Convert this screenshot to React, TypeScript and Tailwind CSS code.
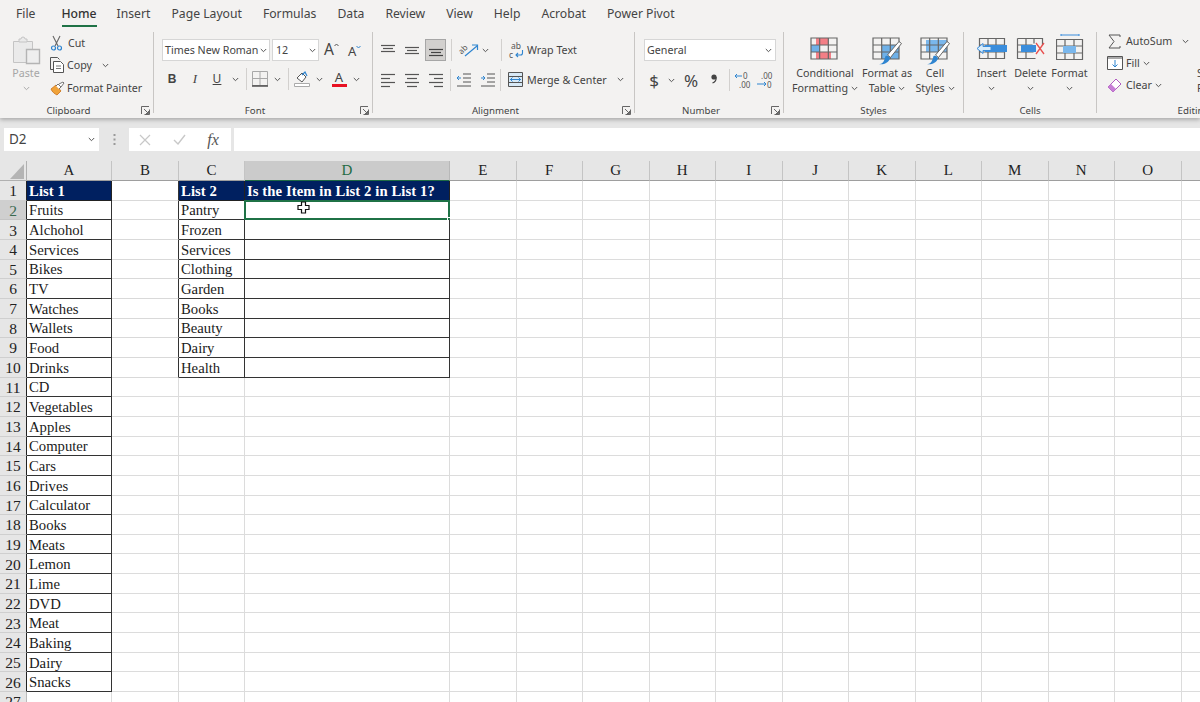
import React from "react";

const Chev = ({ c = "#555" }: { c?: string }) => (
  <svg width="7" height="5" viewBox="0 0 7 5" className="shrink-0"><path d="M.8 1l2.700 2.700L6.200 1" fill="none" stroke={c} strokeWidth="1" /></svg>
);
const Launcher = () => (
  <svg width="9" height="9" viewBox="0 0 9 9"><path d="M.5 8V.5H8M8.500 3.500V8.500H3.500M3 3l4.500 4.500M5 7.500h2.500V5" fill="none" stroke="#666" strokeWidth="1" /></svg>
);
const Lines = ({ rows, w = 16, color = "#555" }: { rows: [number, number, number][]; w?: number; color?: string }) => (
  <svg width={w} height="16" viewBox={`0 0 ${w} 16`}>
    {rows.map(([x1, x2, y], i) => <path key={i} d={`M${x1} ${y + 0.5}H${x2}`} stroke={color} strokeWidth="1.2" />)}
  </svg>
);
const Group = ({ w, label, launcher, children }: { w: string; label: string; launcher?: boolean; children: React.ReactNode }) => (
  <div className={`${w} h-[81px] shrink-0 border-r border-[#c8c6c4] flex flex-col`}>
    <div className="h-[69px]">{children}</div>
    <div className={`relative h-[12px] flex justify-center text-[9.7px] leading-[20px] text-[#444] ${launcher ? "pr-[16px]" : ""}`}>
      {label}
      {launcher && <span className="absolute right-[3px] top-[5px]"><Launcher /></span>}
    </div>
  </div>
);
const Sep = ({ h = "h-[24px]" }: { h?: string }) => <div className={`w-px ${h} bg-[#d2d0ce]`} />;

const TableBase = ({ children, over, w = 26, h = 21 }: { children?: React.ReactNode; over?: React.ReactNode; w?: number; h?: number }) => (
  <svg width={w + 4} height={h + 8} viewBox={`-1 -1 ${w + 4} ${h + 8}`} className="overflow-visible">
    {children}
    <path d={`M0 0H${w}V${h}H0ZM0 ${h / 3}H${w}M0 ${(2 * h) / 3}H${w}M${w / 3} 0V${h}M${(2 * w) / 3} 0V${h}`} fill="none" stroke="#666" strokeWidth="1.200" />
    {over}
  </svg>
);
const Brush = () => (
  <g>
    <path d="M14.500 17L26 3.500l2.500 2L17.500 19.500z" fill="#fff" stroke="#666" strokeWidth="1" />
    <path d="M6 26c3 0 5-1.500 6.500-8 2-.8 4 .5 4.500 2.500C15.500 25 10 27 6 26z" fill="#2f85d0" />
  </g>
);

function Clipboard() {
  return (
    <div className="flex h-full">
      <div className="w-[50px] pl-[2px] flex flex-col items-center pt-[4px] text-[10.700px] text-[#a6a6a6]">
        <svg width="29" height="29" viewBox="0 0 29 29">
          <path d="M1.500 5.500h19v21h-19z" fill="#eaeaea" stroke="#c4c4c4" />
          <path d="M7 6V3h2a2 2 0 0 1 4 0h2v3z" fill="#eaeaea" stroke="#c4c4c4" />
          <path d="M14.500 13.500h13v14h-13z" fill="#eeeeee" stroke="#b4b4b4" strokeWidth="1.400" />
        </svg>
        <span className="leading-[15px] mt-[1px]">Paste</span>
        <span className="mt-[5px]"><Chev c="#aaa" /></span>
      </div>
      <div className="flex flex-col text-[10.700px] text-[#444]">
        <div className="h-[22px] flex items-center">
          <svg width="13" height="16" viewBox="0 0 13 16" className="mr-[5px]">
            <path d="M3 1l5 10M10 1L5 11" stroke="#666" strokeWidth="1.100" fill="none" />
            <circle cx="3.500" cy="13" r="2" fill="none" stroke="#2f85d0" strokeWidth="1.200" />
            <circle cx="9.500" cy="13" r="2" fill="none" stroke="#2f85d0" strokeWidth="1.200" />
          </svg>
          Cut
        </div>
        <div className="h-[22px] flex items-center">
          <svg width="16" height="16" viewBox="0 0 16 16" className="mr-[1px]">
            <path d="M3.500 12.500h-3V.5h7l2 2" fill="none" stroke="#555" />
            <path d="M3.500 4.500h7l3 3v8h-10z" fill="#fff" stroke="#555" />
            <path d="M6 9h5M6 11.500h5" stroke="#777" />
          </svg>
          <span>Copy</span>
          <span className="ml-[10px]"><Chev /></span>
        </div>
        <div className="h-[22px] mt-[1px] flex items-center">
          <svg width="15" height="15" viewBox="0 0 15 15" className="mr-[2px]">
            <path d="M1 8l5-4 5 6-4 4C5 13 2 11 1 8z" fill="#f0a33a" stroke="#c8701a" strokeWidth=".8" />
            <path d="M6 5l2-2 3 3-2 2M9 3l4-2 1 1-3 4" fill="#fff" stroke="#666" strokeWidth=".9" />
          </svg>
          Format Painter
        </div>
      </div>
    </div>
  );
}

function FontGroup() {
  return (
    <div className="pl-[8px] pt-[7px] text-[#444]">
      <div className="flex items-center h-[22px]">
        <div className="w-[108px] h-[22px] bg-white border border-[#d6d6d6] flex items-center justify-between px-[2px] text-[10.700px] whitespace-nowrap">Times New Roman<Chev /></div>
        <div className="ml-[2px] w-[47px] h-[22px] bg-white border border-[#d6d6d6] flex items-center justify-between pl-[3px] pr-[2px] text-[10.700px]">12<Chev /></div>
        <div className="ml-[5px] w-[19px] flex items-start text-[15.500px] leading-none">A<svg width="5" height="4" viewBox="0 0 5 4" className="mt-[1px]"><path d="M.5 3L2.500 1l2 2" fill="none" stroke="#555" /></svg></div>
        <div className="ml-[5px] w-[18px] flex items-start text-[13px] leading-none pt-[2px]">A<svg width="5" height="4" viewBox="0 0 5 4"><path d="M.5 1l2 2 2-2" fill="none" stroke="#2f85d0" /></svg></div>
      </div>
      <div className="flex items-center h-[22px] mt-[7px] text-[12px]">
        <div className="w-[20px] text-center font-bold font-['Liberation_Sans',sans-serif]">B</div>
        <div className="w-[26px] text-center italic font-['Liberation_Serif',serif] text-[13px]">I</div>
        <div className="w-[18px] text-center underline">U</div>
        <div className="w-[18px] flex justify-center"><Chev /></div>
        <div className="w-[4px] flex justify-center"><Sep h="h-[22px]" /></div>
        <div className="w-[23px] flex justify-center">
          <svg width="16" height="16" viewBox="0 0 16 16"><path d="M.5 .5h15v14H.5zM8 .5v14M.5 7.500h15" fill="none" stroke="#a8a8a8" /><path d="M0 15h16" stroke="#444" strokeWidth="1.400" /></svg>
        </div>
        <div className="w-[12px] flex justify-center"><Chev /></div>
        <div className="w-[10px] flex justify-center"><Sep h="h-[22px]" /></div>
        <div className="w-[18px] flex justify-center">
          <svg width="16" height="16" viewBox="0 0 16 16"><path d="M3 7l5-5 4 4-4 5z" fill="#fff" stroke="#555" /><path d="M8 4l3-3 2 4" fill="none" stroke="#2f85d0" strokeWidth="1.200" /><path d="M.5 12.500h15v3H.5z" fill="#fff" stroke="#aaa" /></svg>
        </div>
        <div className="w-[16px] flex justify-center"><Chev /></div>
        <div className="w-[24px] flex flex-col items-center">
          <span className="text-[13px] leading-[13px]">A</span>
          <span className="w-[15px] h-[3px] bg-[#e81123]" />
        </div>
        <div className="w-[10px] flex justify-center"><Chev /></div>
      </div>
    </div>
  );
}

const L3 = { top: [[1, 15, 3], [3, 13, 6], [1, 15, 9]] as [number, number, number][], mid: [[1, 15, 5], [3, 13, 8], [1, 15, 11]] as [number, number, number][], bot: [[1, 15, 7], [3, 13, 10], [1, 15, 13]] as [number, number, number][] };
const L4l: [number, number, number][] = [[1, 15, 2], [1, 10, 6], [1, 15, 10], [1, 10, 14]];
const L4c: [number, number, number][] = [[1, 15, 2], [3, 13, 6], [1, 15, 10], [3, 13, 14]];
const L4r: [number, number, number][] = [[1, 15, 2], [6, 15, 6], [1, 15, 10], [6, 15, 14]];
const Slot24 = ({ children }: { children: React.ReactNode }) => <div className="w-[24px] flex justify-center">{children}</div>;

function Alignment() {
  return (
    <div className="pl-[3px] pt-[7px] text-[#444] text-[10.700px]">
      <div className="flex items-center h-[22px]">
        <Slot24><Lines rows={L3.top} /></Slot24>
        <Slot24><Lines rows={L3.mid} /></Slot24>
        <div className="ml-px w-[21px] h-[22px] bg-[#d2d0ce] border border-[#a6a6a6] flex justify-center items-center"><Lines rows={L3.bot} color="#444" /></div>
        <div className="w-[10px] flex justify-center"><Sep h="h-[22px]" /></div>
        <div className="w-[41px] flex items-center pl-[1px]">
          <svg width="24" height="18" viewBox="0 0 24 18" className="overflow-visible">
            <text x="1" y="11" fontSize="8" fill="#555" transform="rotate(-45 6 8)" fontFamily="Noto Sans">ab</text>
            <path d="M8 15L20 5M15 4h5.500v5" fill="none" stroke="#2f85d0" strokeWidth="1.200" />
          </svg>
          <span className="ml-[1px]"><Chev /></span>
        </div>
        <div className="w-[8px] flex justify-center"><Sep h="h-[22px]" /></div>
        <div className="ml-[4px] flex items-center whitespace-nowrap">
          <span className="relative w-[15px] h-[17px] mr-[3px] overflow-visible">
            <span className="absolute left-[2px] -top-[1px] text-[8.500px] leading-[9px] text-[#555]">ab</span>
            <span className="absolute left-0 top-[8px] text-[8.500px] leading-[9px] text-[#555]">c</span>
            <svg width="15" height="17" viewBox="0 0 15 17" className="absolute left-0 top-0">
              <path d="M13.500 8v3a2 2 0 0 1-2 2H7M9 11l-2 2 2 2" fill="none" stroke="#2f85d0" strokeWidth="1.100" />
            </svg>
          </span>
          Wrap Text
        </div>
      </div>
      <div className="flex items-center h-[22px] mt-[8px]">
        <Slot24><Lines rows={L4l} /></Slot24>
        <Slot24><Lines rows={L4c} /></Slot24>
        <Slot24><Lines rows={L4r} /></Slot24>
        <div className="w-[4px] flex justify-center"><Sep h="h-[22px]" /></div>
        <Slot24>
          <svg width="16" height="16" viewBox="0 0 16 16"><path d="M7 2h8M7 6h8M7 10h8M1 14h14" stroke="#555" /><path d="M5 6H1M3 4L1 6l2 2" fill="none" stroke="#2f85d0" /></svg>
        </Slot24>
        <Slot24>
          <svg width="16" height="16" viewBox="0 0 16 16"><path d="M7 2h8M7 6h8M7 10h8M1 14h14" stroke="#555" /><path d="M1 6h4M3 4l2 2-2 2" fill="none" stroke="#2f85d0" /></svg>
        </Slot24>
        <div className="w-[1px] flex justify-center"><Sep h="h-[22px]" /></div>
        <div className="ml-[7px] flex items-center whitespace-nowrap">
          <svg width="15" height="15" viewBox="0 0 15 15" className="mr-[4px]">
            <path d="M.5 .5h14v14H.5z" fill="#d8e9f6" stroke="#555" />
            <path d="M.5 4.500h14M.5 10.500h14" stroke="#555" />
            <path d="M2 7.500h11M4.500 5.500l-2 2 2 2M10.500 5.500l2 2-2 2" fill="none" stroke="#2f85d0" />
          </svg>
          Merge &amp; Center
          <span className="ml-[10px]"><Chev /></span>
        </div>
      </div>
    </div>
  );
}

function NumberGroup() {
  return (
    <div className="pl-[9px] pt-[7px] text-[#444]">
      <div className="w-[132px] h-[22px] bg-white border border-[#d6d6d6] flex items-center justify-between pl-[2px] pr-[3px] text-[10.700px]">General<Chev /></div>
      <div className="flex items-center h-[22px] mt-[8px]">
        <div className="w-[20px] text-center text-[17px] leading-none">$</div>
        <div className="w-[14px] flex justify-center"><Chev /></div>
        <div className="w-[26px] text-center text-[17px] leading-none">%</div>
        <div className="w-[20px] h-[22px] flex justify-center">
          <svg width="6" height="12" viewBox="0 0 6 12" className="mt-[5px]"><circle cx="3" cy="3" r="2.600" fill="#444" /><path d="M5 3c.5 3-1 5-3.500 6" fill="none" stroke="#444" strokeWidth="1.200" /></svg>
        </div>
        <div className="w-[10px] flex justify-center"><Sep h="h-[22px]" /></div>
        <div className="w-[18px] relative h-[18px] text-[8px] leading-[9px] text-[#555]">
          <span className="absolute left-[9px] top-0">0</span>
          <span className="absolute left-[5px] top-[9px]">.00</span>
          <svg width="8" height="8" viewBox="0 0 8 8" className="absolute left-0 top-[1px]"><path d="M8 4H1M3 2L1 4l2 2" fill="none" stroke="#2f85d0" /></svg>
        </div>
        <div className="ml-[2px] w-[22px] relative h-[18px] text-[8px] leading-[9px] text-[#555]">
          <span className="absolute left-[7px] top-0">.00</span>
          <span className="absolute left-[13px] top-[9px]">0</span>
          <svg width="11" height="8" viewBox="0 0 11 8" className="absolute left-[2px] top-[9px]"><path d="M1 4h9M8 2l2 2-2 2" fill="none" stroke="#2f85d0" /></svg>
        </div>
      </div>
    </div>
  );
}

const BigBtn = ({ w, icon, l1, l2 }: { w: string; icon: React.ReactNode; l1: string; l2?: string }) => (
  <div className={`${w} shrink-0 flex flex-col items-center pt-[5px] text-[10.700px] leading-[15px] text-[#444] whitespace-nowrap`}>
    <div className="h-[29px]">{icon}</div>
    <span>{l1}</span>
    {l2 ? <span className="flex items-center gap-[3px]">{l2}<Chev /></span> : <span className="h-[15px] flex items-center"><Chev /></span>}
  </div>
);

function Styles() {
  return (
    <div className="flex pl-[8px] h-full">
      <BigBtn w="w-[66px]" l1="Conditional" l2="Formatting" icon={
        <TableBase>
          <rect x="5" y="0" width="12" height="7" fill="#f37f86" />
          <rect x="5" y="14" width="15" height="7" fill="#f37f86" />
          <rect x="0" y="7" width="9" height="7" fill="#6fb1e8" />
        </TableBase>} />
      <BigBtn w="w-[58px]" l1="Format as" l2="Table" icon={
        <TableBase over={<Brush />}>
          <rect x="9" y="7" width="17" height="14" fill="#6fb1e8" />
        </TableBase>} />
      <BigBtn w="w-[38px]" l1="Cell" l2="Styles" icon={
        <TableBase over={<Brush />}>
          <rect x="5" y="2" width="21" height="12" fill="#7ab7ec" />
        </TableBase>} />
    </div>
  );
}

function Cells() {
  return (
    <div className="flex pl-[8px] h-full">
      <BigBtn w="w-[39px]" l1="Insert" icon={
        <svg width="30" height="24" viewBox="0 0 30 24">
          <path d="M2.500 1.500h25v20h-25zM2.500 8h25M2.500 15h25M11 1.500v20M19 1.500v20" fill="none" stroke="#666" strokeWidth="1.200" />
          <rect x="8" y="8" width="22" height="7" fill="#3a8ddc" />
          <path d="M0 11.500L6 6.500v3h8v4H6v3z" fill="#d9ecfa" stroke="#3a8ddc" />
        </svg>} />
      <BigBtn w="w-[39px]" l1="Delete" icon={
        <svg width="30" height="24" viewBox="0 0 30 24">
          <path d="M1.500 1.500h25v6.500M1.500 1.500v20h18M1.500 8h15M1.500 15h16M10 1.500v20M18 1.500v5" fill="none" stroke="#666" strokeWidth="1.200" />
          <rect x="5" y="8" width="15" height="7" fill="#3a8ddc" />
          <path d="M20 6l8 11M28 6l-8 11" stroke="#e8504f" strokeWidth="1.300" />
        </svg>} />
      <BigBtn w="w-[39px]" l1="Format" icon={
        <svg width="28" height="26" viewBox="0 0 28 26" className="-mt-[3px]">
          <path d="M5 1h18M5 0v2M23 0v2" stroke="#3a8ddc" />
          <path d="M.5 5.500h26v20H.5zM.5 12h26M.5 19h26M9 5.500v20M18 5.500v20" fill="none" stroke="#666" strokeWidth="1.200" />
          <rect x="7" y="12" width="13" height="7" fill="#7ab7ec" />
        </svg>} />
    </div>
  );
}

function Editing() {
  return (
    <div className="flex pl-[10px] -mt-[2px] text-[#444] text-[10.700px]">
      <div className="w-[90px] shrink-0">
        <div className="h-[22px] flex items-center">
          <span className="w-[19px] flex"><svg width="14" height="15" viewBox="0 0 14 15"><path d="M13 3V1H2l5 6.500L2 14h11v-2" fill="none" stroke="#555" /></svg></span>
          AutoSum<span className="ml-[10px]"><Chev /></span>
        </div>
        <div className="h-[22px] flex items-center">
          <span className="w-[19px] flex"><svg width="16" height="14" viewBox="0 0 16 14"><path d="M.5 .500h15v13H.5z" fill="#fff" stroke="#555" /><path d="M.5 2h15" stroke="#555" /><path d="M8 4v7M5.500 8.500L8 11l2.500-2.500" fill="none" stroke="#2f85d0" /></svg></span>
          Fill<span className="ml-[3px]"><Chev /></span>
        </div>
        <div className="h-[22px] flex items-center">
          <span className="w-[19px] flex"><svg width="15" height="15" viewBox="0 0 15 15"><path d="M1 9l8-8 5 5-8 8z" fill="#fff" stroke="#b05cc0" /><path d="M1 9l3-3 5 5-3 3z" fill="#c77fd6" /></svg></span>
          Clear<span className="ml-[3px]"><Chev /></span>
        </div>
      </div>
      <div className="pt-[36px] leading-[15px] whitespace-nowrap">Sort &amp;<br />Filter</div>
    </div>
  );
}

const cols = ["A", "B", "C", "D", "E", "F", "G", "H", "I", "J", "K", "L", "M", "N", "O", "P"];
const list1 = ["List 1", "Fruits", "Alchohol", "Services", "Bikes", "TV", "Watches", "Wallets", "Food", "Drinks", "CD", "Vegetables", "Apples", "Computer", "Cars", "Drives", "Calculator", "Books", "Meats", "Lemon", "Lime", "DVD", "Meat", "Baking", "Dairy", "Snacks"];
const list2 = ["List 2", "Pantry", "Frozen", "Services", "Clothing", "Garden", "Books", "Beauty", "Dairy", "Health"];

function Sheet() {
  const cells: React.ReactNode[] = [];
  cells.push(
    <div key="corner" className="bg-[#e6e6e6] border-r border-b border-[#b0b0b0] flex items-end justify-end pr-[2px] pb-[1px]">
      <svg width="14" height="15" viewBox="0 0 14 15"><path d="M14 0v15H0z" fill="#b4b4b4" /></svg>
    </div>
  );
  cols.forEach((c) => {
    const sel = c === "D";
    cells.push(
      <div key={c} className={`border-r border-b flex items-center justify-center text-[15px] ${sel ? "bg-[#cbcbcb] text-[#1f6b44] border-[#b8b8b8] border-b-[#1f6b44]" : "bg-[#e6e6e6] text-[#222] border-[#c4c4c4] border-b-[#9e9e9e]"}`}>{c === "P" ? "" : c}</div>
    );
  });
  for (let r = 1; r <= 27; r++) {
    const inA = r <= 26;
    const inC = r <= 10;
    const rowSel = r === 2;
    cells.push(
      <div key={`h${r}`} className={`flex items-center justify-center text-[15.500px] pt-[1px] border-b ${rowSel ? "bg-[#cfcfcf] text-[#3a6a50] border-[#c4c4c4]" : "bg-[#e6e6e6] text-[#222] border-[#cfcfcf]"} ${inA ? "border-r border-r-[#222]" : "border-r border-r-[#bbb]"}`}>{r}</div>
    );
    cols.forEach((c) => {
      const key = `${c}${r}`;
      const framed = (c === "A" && inA) || ((c === "C" || c === "D") && inC);
      const leftOfFrame = c === "B" && inC;
      const header = r === 1 && (c === "A" || c === "C" || c === "D");
      let text = "";
      if (c === "A" && inA) text = list1[r - 1];
      if (c === "C" && inC) text = list2[r - 1];
      if (c === "D" && r === 1) text = "Is the Item in List 2 in List 1?";
      cells.push(
        <div
          key={key}
          className={`relative min-w-0 whitespace-nowrap pt-[1px] flex items-center text-[14.700px] border-r border-b pl-[2px] ${
            header ? "bg-[#002060] text-white font-bold border-[#222] tracking-[0.08px]" : framed ? "bg-white text-[#1a1a1a] border-[#333]" : leftOfFrame ? "bg-white border-[#d9d9d9] border-r-[#333]" : "bg-white border-[#dcdcdc]"
          }`}
        >
          {text}
          {key === "D2" && (
            <>
              <span className="absolute -inset-x-px -top-px -bottom-px border-2 border-[#1f7246]" />
              <span className="absolute -right-[3px] -bottom-[3px] w-[5px] h-[5px] bg-[#1f7246] border border-white" />
              <svg width="13" height="13" viewBox="0 0 13 13" className="absolute left-[52px] top-[0px]">
                <path d="M4.500 1h4v3.500H12v4H8.500V12h-4V8.500H1v-4h3.500z" fill="#fff" stroke="#111" strokeWidth="1.200" />
              </svg>
            </>
          )}
        </div>
      );
    });
  }
  return (
    <div className="grid grid-cols-[27px_85px_67px_66px_205px_repeat(12,66.5px)] grid-rows-[20px_repeat(27,19.66px)] font-['Liberation_Serif',serif] w-[1248px]">
      {cells}
    </div>
  );
}

export default function App() {
  const tabs = ["Insert", "Page Layout", "Formulas", "Data", "Review", "View", "Help", "Acrobat", "Power Pivot"];
  return (
    <div className="w-[1200px] h-[702px] overflow-hidden bg-white font-['Noto_Sans',sans-serif]">
      <div className="relative z-10 h-[118px] bg-[#f3f2f1] shadow-[0_2px_4px_rgba(0,0,0,0.25)]">
        <div className="h-[32px] flex items-start pl-[16px] text-[12.200px] text-[#444] whitespace-nowrap">
          <div className="pt-[5px] leading-[18px]">File</div>
          <div className="ml-[26px] pt-[5px] leading-[18px] h-[27px] border-b-[2.500px] border-[#1f7246] font-medium text-[#333]">Home</div>
          <div className="flex gap-[21px] ml-[20px] pt-[5px] leading-[18px]">
            {tabs.map((t) => <span key={t}>{t}</span>)}
          </div>
        </div>
        <div className="flex">
          <Group w="w-[154px]" label="Clipboard" launcher><Clipboard /></Group>
          <Group w="w-[219px]" label="Font" launcher><FontGroup /></Group>
          <Group w="w-[262px]" label="Alignment" launcher><Alignment /></Group>
          <Group w="w-[149px]" label="Number" launcher><NumberGroup /></Group>
          <Group w="w-[180px]" label="Styles"><Styles /></Group>
          <Group w="w-[133px]" label="Cells"><Cells /></Group>
          <Group w="w-[194px]" label="Editing"><Editing /></Group>
        </div>
      </div>
      <div className="h-[43px] bg-[#e6e6e6] flex pt-[10px] text-[#444]">
        <div className="ml-[4px] w-[95px] h-[23px] bg-white flex items-center justify-between pl-[5px] pr-[4px] text-[13.500px]">D2<Chev /></div>
        <div className="w-[30px] h-[23px] flex justify-center items-center">
          <svg width="3" height="13" viewBox="0 0 3 13"><path d="M1.500 1v2M1.500 5.500v2M1.500 10v2" stroke="#999" strokeWidth="2" /></svg>
        </div>
        <div className="w-[102px] h-[23px] bg-white flex items-center">
          <div className="w-[32px] flex justify-center"><svg width="12" height="12" viewBox="0 0 12 12"><path d="M1 1l10 10M11 1L1 11" stroke="#c8c8c8" strokeWidth="1.200" /></svg></div>
          <div className="w-[36px] flex justify-center"><svg width="13" height="11" viewBox="0 0 13 11"><path d="M1 6l4 4 7-9" fill="none" stroke="#c8c8c8" strokeWidth="1.400" /></svg></div>
          <div className="w-[32px] text-center italic text-[16px] font-['Liberation_Serif',serif] text-[#555]">fx</div>
        </div>
        <div className="ml-[3px] flex-1 h-[23px] bg-white" />
      </div>
      <Sheet />
    </div>
  );
}
